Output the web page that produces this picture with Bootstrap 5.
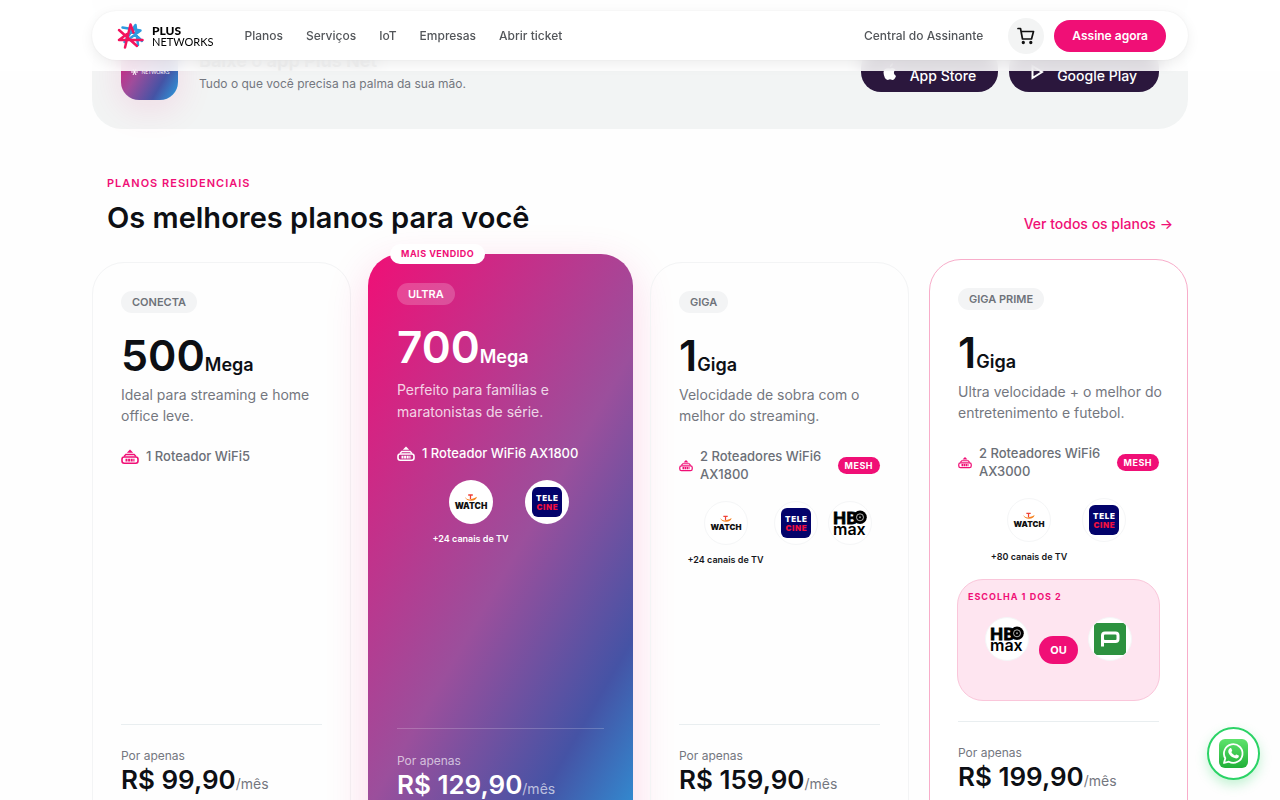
<!DOCTYPE html>
<html lang="pt-BR">
<head>
<meta charset="utf-8">
<meta name="viewport" content="width=device-width, initial-scale=1">
<title>Plus Networks</title>
<link href="https://cdn.jsdelivr.net/npm/bootstrap@5.3.0/dist/css/bootstrap.min.css" rel="stylesheet">
<style>
:root{--pink:#f00f76;--ink:#0d0f14;--gray:#74777f}
body{font-family:Inter,"Liberation Sans",sans-serif;color:var(--ink);background:#fefefe;height:100vh;overflow:hidden;-webkit-font-smoothing:antialiased}
.wrap{max-width:1144px;padding:0 24px;margin:0 auto;width:100%}
.topbar{background:rgba(255,255,255,.88);backdrop-filter:blur(8px);padding:11px 0}
.pill{background:#fff;border-radius:30px;height:49px;padding:0 22px 0 24px;box-shadow:0 0 2px rgba(0,0,0,.06),0 4px 14px rgba(0,0,0,.07)}
.brand{text-decoration:none;color:#000;gap:7px;font-family:Lato,sans-serif;font-size:11px;line-height:11px}
.brand b,.brand i{display:block;font-style:normal}
.brand b{font-weight:900;font-size:12px}
.navlink{font-size:12px;font-weight:500;color:#53565a;text-decoration:none}
.menu{gap:23px;margin-left:31px}
.cart{width:36px;height:36px;border-radius:50%;border:0;background:#f3f4f4;margin-left:25px;margin-right:10px;place-items:center}
.cta{background:var(--pink);color:#fff;border:0;border-radius:16px;height:32px;padding:0 18px;font-size:12px;font-weight:600}
.app{background:#f2f4f4;border-radius:0 0 30px 30px;height:129px;padding:0 29px 29px}
.appicon{width:57px;height:64px;border-radius:18px;background:linear-gradient(120deg,#e91175,#a04c9b 40%,#4553a5 72%,#2b9fe0);box-shadow:0 8px 36px rgba(240,15,118,.12);color:#fff;font:5px/8px Lato,sans-serif;padding-top:32px;gap:3px}
.apptext{margin-left:21px;margin-bottom:7px}
.apptext h3{font-size:18px;line-height:24px;font-weight:700;margin:0 0 2px}
.apptext p{font-size:12px;line-height:18px;color:var(--gray);margin:0}
.store{background:#2b173d;color:#fff;border-radius:20px;height:44px;padding:0 22px;margin-bottom:8px;font-size:14px;font-weight:500;text-decoration:none;gap:13px}
.store span{padding-top:10px}
.store svg{margin-top:4px}
.kick{color:var(--pink);font-size:11px;line-height:16px;font-weight:600;letter-spacing:1px;text-transform:uppercase}
.head{padding:46px 15px 0}
.head h2{font-size:29px;line-height:40px;font-weight:600;margin:7px 0 0}
.all{color:var(--pink);font-size:14px;line-height:20px;font-weight:500;text-decoration:none;margin-bottom:4px}
.plans{display:grid;grid-template-columns:repeat(4,minmax(0,1fr));gap:20px;margin-top:24px}
.plan{border:1px solid #f3f4f5;border-radius:32px;padding:28px 28px 100px;display:flex;flex-direction:column;align-items:flex-start;position:relative}
.hot{margin:-8px -3px;border:0;color:#fff;background:linear-gradient(120deg,#f00f76,#9b4f9c 50%,#4553a5 76%,#2b9fe0 97%);box-shadow:0 12px 44px rgba(240,15,118,.16);padding:29px 29px 104px}
.prime{border-color:#f8adca;margin:-3px 0 3px;background:#fff}
.tagname{background:#f3f4f5;color:#6e7279;border-radius:11px;line-height:22px;padding:0 11px;font-size:11px;font-weight:600}
.hot .tagname{background:rgba(255,255,255,.2);color:#fff}
.sold{position:absolute;left:22px;top:-10px;background:#fff;color:var(--pink);font-size:9px;line-height:20px;font-weight:700;border-radius:10px;padding:0 11px;letter-spacing:.5px}
.speed{font-size:43px;line-height:36px;font-weight:600;margin-top:24px}
.speed span{font-size:18px}
.hot .speed{font-size:44px}
.desc{font-size:14px;line-height:21px;color:var(--gray);margin:1px 0 0;min-height:42px;white-space:nowrap}
.hot .desc{color:rgba(255,255,255,.8);line-height:22px;margin-top:4px}
.feat{font-size:13px;line-height:18px;font-weight:500;color:#6b6f77;margin-top:21px;gap:7px;width:100%}
.feat svg{width:18px;height:18px;color:var(--pink);flex-shrink:0}
.two svg{width:14px;height:14px}
.hot .feat,.hot .feat svg{color:#fff}
.mesh{background:var(--pink);color:#fff;font-size:9px;font-weight:700;line-height:17px;padding:0 7px;border-radius:9px;margin-left:auto;letter-spacing:.5px}
.apps{display:flex;width:100%;margin-top:18px;justify-content:center;align-items:flex-start}
.svc{display:flex;flex-direction:column;align-items:center;font-size:9px;font-weight:600;line-height:14px;white-space:nowrap;gap:8px;color:#15171c}
.disc{width:44px;height:44px;border-radius:50%;background:#fff;border:1px solid #f5f6f7;display:grid;place-items:center;overflow:hidden}
.hot .disc{border:0}.hot .svc{color:#fff}
.pick{width:calc(100% + 2px);margin:15px -1px 0;min-height:122px;background:#fee5f0;border:1px solid #fac6da;border-radius:26px;padding:9px 10px}
.pick .kick{font-size:9px;font-weight:700;line-height:16px}
.pickrow{gap:10px;margin-top:12px}
.or{background:var(--pink);color:#fff;font-size:11px;font-weight:700;line-height:28px;border-radius:14px;padding:0 11px;margin-top:19px}
.cost{border-top:1px solid #e9eef0;width:100%;margin-top:auto;padding-top:23px}
.hot .cost{border-color:rgba(255,255,255,.2);padding-top:24px}
.cost small{display:block;font-size:12px;line-height:16px;color:var(--gray)}
.cost strong{font-size:26px;line-height:32px;font-weight:600}
.cost span{font-size:14px;color:var(--gray)}
.hot .cost small,.hot .cost span{color:rgba(255,255,255,.65)}
.prime .cost{margin-top:20px}
.wa{position:fixed;right:20px;bottom:20px;width:53px;height:53px;border-radius:50%;background:#fff;border:2px solid #2bd366;box-shadow:0 5px 12px rgba(43,211,102,.28);display:grid;place-items:center}
</style>
</head>
<body>
<svg width="0" height="0" class="position-absolute">
<defs>
<linearGradient id="gw" x2="0" y2="1"><stop stop-color="#5ee36c"/><stop offset="1" stop-color="#20b038"/></linearGradient>
<symbol id="router" viewBox="0 0 18 18"><path fill="currentColor" d="M9 2.500 12.200 5.700H5.800z"/><rect x="1" y="10" width="16" height="6.200" rx="2.200" fill="none" stroke="currentColor" stroke-width="1.600"/><path d="M3 9.500 4.800 7.500h8.400l1.800 2" fill="none" stroke="currentColor" stroke-width="1.300"/><path d="M4.500 13.100h9" stroke="currentColor" stroke-width="2.800" stroke-dasharray="2 .6"/></symbol>
<symbol id="watch" viewBox="0 0 34 18"><path d="M11 3.800q1.500 3.300 5.800 2.400T23 3.800q-1 4-6 4T11 3.800z" fill="#f58220"/><path d="M14.200 2h4.600M16.500 2v4" stroke="#ef4136" stroke-width="1.300"/><text x="17" y="16" text-anchor="middle" font-family="Inter,sans-serif" font-size="8.500" font-weight="900" fill="#111">WATCH</text></symbol>
<symbol id="tele" viewBox="0 0 30 30"><rect width="30" height="30" rx="6" fill="#03036b"/><text x="15.300" y="14" text-anchor="middle" font-family="Inter,sans-serif" font-size="8" font-weight="900" letter-spacing=".7" fill="#fff">TELE</text><text x="15.300" y="22.800" text-anchor="middle" font-family="Inter,sans-serif" font-size="8" font-weight="900" letter-spacing=".6" fill="#f01040">CINE</text></symbol>
<symbol id="hbo" viewBox="0 0 34 26"><text x="0" y="13.500" font-family="Lato,sans-serif" font-size="17" font-weight="900" stroke="#000" stroke-width=".8" fill="#000">HB</text><circle cx="27" cy="7.300" r="6.800" fill="#000"/><circle cx="27" cy="7.300" r="3.500" fill="none" stroke="#fff" stroke-width=".7"/><circle cx="27" cy="7.300" r="1" fill="#999"/><text x="0" y="24.500" font-family="Inter,sans-serif" font-size="16" font-weight="600" fill="#000">max</text></symbol>
<symbol id="star" viewBox="0 0 28 28"><g fill="none" stroke-width="2.500" stroke-linecap="round" stroke-linejoin="round"><path stroke="#2d9be0" d="M6 5.500 24 8.500 14 16M19 3 8 20M25.500 19 13 7M19 3l2.500 20"/><path stroke="#f2135d" d="M2.500 8 20.500 24M2.500 18H26M8.500 25.500 14 2.500M14 2.500l3 8M2.500 18l8-6"/></g></symbol>
</defs>
</svg>

<header class="topbar fixed-top">
<div class="wrap">
<nav class="pill d-flex align-items-center">
<a href="#" class="brand d-flex align-items-center"><svg width="29" height="28"><use href="#star"/></svg><span><b>PLUS</b><i>NETWORKS</i></span></a>
<div class="menu d-flex">
<a class="navlink" href="#">Planos</a><a class="navlink" href="#">Serviços</a><a class="navlink" href="#">IoT</a><a class="navlink" href="#">Empresas</a><a class="navlink" href="#">Abrir ticket</a>
</div>
<a class="navlink ms-auto" href="#">Central do Assinante</a>
<button class="cart d-grid p-0" aria-label="Carrinho"><svg width="20" height="20" viewBox="0 0 20 20" fill="none" stroke="#111" stroke-width="1.700" stroke-linecap="round" stroke-linejoin="round"><path d="M2 2.500h2.500l2 10.500h9l2-7.500H5.200"/><circle cx="7.300" cy="16.500" r=".8"/><circle cx="14.800" cy="16.500" r=".8"/></svg></button>
<button class="cta">Assine agora</button>
</nav>
</div>
</header>

<main>
<div class="wrap">
<section class="app d-flex align-items-end">
<div class="appicon d-flex justify-content-center align-items-start"><svg width="9" height="8"><g stroke="#fff"><path d="M1 4h7M3 1l3 6M6 1 3 7"/></g></svg><span>NETWORKS</span></div>
<div class="apptext"><h3>Baixe o app Plus Net</h3><p>Tudo o que você precisa na palma da sua mão.</p></div>
<div class="d-flex ms-auto" style="gap:11px">
<a href="#" class="store d-flex align-items-center"><svg width="14" height="18" viewBox="0 0 14 18"><path fill="#fff" d="M10 0Q7 .5 7 4 10 3.500 10 0M13 13q-1.500 4-3.500 4L7 16.300 4.700 17Q1 16 .5 9.500 1 4.500 7 5.500q3-1.500 5.500 1-3.500 3.500.5 6.500"/></svg><span>App Store</span></a>
<a href="#" class="store d-flex align-items-center"><svg width="13" height="16" viewBox="0 0 13 16"><path fill="none" stroke="#fff" stroke-width="2" d="M1.500 2v12L11 8z"/></svg><span>Google Play</span></a>
</div>
</section>

<section>
<div class="head d-flex justify-content-between align-items-end">
<div><div class="kick">Planos residenciais</div><h2>Os melhores planos para você</h2></div>
<a class="all" href="#">Ver todos os planos →</a>
</div>
<div class="plans">
<article class="plan">
<span class="tagname">CONECTA</span>
<div class="speed">500<span>Mega</span></div>
<p class="desc">Ideal para streaming e home<br>office leve.</p>
<div class="feat d-flex align-items-center"><svg><use href="#router"/></svg>1 Roteador WiFi5</div>
<div class="cost"><small>Por apenas</small><strong>R$ 99,90</strong><span>/mês</span></div>
</article>

<article class="plan hot">
<span class="sold">MAIS VENDIDO</span>
<span class="tagname">ULTRA</span>
<div class="speed">700<span>Mega</span></div>
<p class="desc">Perfeito para famílias e<br>maratonistas de série.</p>
<div class="feat d-flex align-items-center"><svg><use href="#router"/></svg>1 Roteador WiFi6 AX1800</div>
<div class="apps" style="gap:16px"><div class="svc"><div class="disc"><svg width="34" height="18"><use href="#watch"/></svg></div>+24 canais de TV</div><div class="svc"><div class="disc"><svg width="30" height="30"><use href="#tele"/></svg></div></div></div>
<div class="cost"><small>Por apenas</small><strong>R$ 129,90</strong><span>/mês</span></div>
</article>

<article class="plan">
<span class="tagname">GIGA</span>
<div class="speed">1<span>Giga</span></div>
<p class="desc">Velocidade de sobra com o<br>melhor do streaming.</p>
<div class="feat two d-flex align-items-center"><svg><use href="#router"/></svg><span>2 Roteadores WiFi6<br>AX1800</span><span class="mesh">MESH</span></div>
<div class="apps" style="gap:10px"><div class="svc"><div class="disc"><svg width="32" height="18"><use href="#watch"/></svg></div>+24 canais de TV</div><div class="svc"><div class="disc"><svg width="30" height="30"><use href="#tele"/></svg></div></div><div class="svc"><div class="disc"><svg width="34" height="26"><use href="#hbo"/></svg></div></div></div>
<div class="cost"><small>Por apenas</small><strong>R$ 159,90</strong><span>/mês</span></div>
</article>

<article class="plan prime">
<span class="tagname">GIGA PRIME</span>
<div class="speed">1<span>Giga</span></div>
<p class="desc">Ultra velocidade + o melhor do<br>entretenimento e futebol.</p>
<div class="feat two d-flex align-items-center"><svg><use href="#router"/></svg><span>2 Roteadores WiFi6<br>AX3000</span><span class="mesh">MESH</span></div>
<div class="apps" style="gap:15px"><div class="svc"><div class="disc"><svg width="32" height="18"><use href="#watch"/></svg></div>+80 canais de TV</div><div class="svc"><div class="disc"><svg width="30" height="30"><use href="#tele"/></svg></div></div></div>
<div class="pick"><div class="kick">Escolha 1 dos 2</div>
<div class="pickrow d-flex justify-content-center align-items-start"><div class="disc"><svg width="34" height="26"><use href="#hbo"/></svg></div><div class="or">OU</div><div class="disc"><svg width="32" height="32" viewBox="0 0 32 32"><rect width="32" height="32" fill="#2c923f"/><rect x="8.500" y="10" width="15.500" height="8.500" rx="2.500" fill="none" stroke="#fff" stroke-width="3"/><rect x="7" y="13" width="3" height="10.500" fill="#fff"/></svg></div></div></div>
<div class="cost"><small>Por apenas</small><strong>R$ 199,90</strong><span>/mês</span></div>
</article>
</div>
</section>
</div>
</main>

<a href="#" class="wa" aria-label="WhatsApp"><svg width="29" height="29" viewBox="0 0 29 29"><rect width="29" height="29" rx="6" fill="url(#gw)"/><path d="M5 24 6.300 19.300A9.300 9.300 0 1 1 9.900 22.700Z" fill="none" stroke="#fff" stroke-width="1.800" stroke-linejoin="round"/><path d="M11 9.300c.9-.5 1.300-.2 1.600.7l.6 1.500c.1.600-.3 1-.9 1.600.9 1.700 2 2.700 3.700 3.500.7-.6 1-1.300 1.500-1.100l2.200 1.100c.4.300.1 1.500-.5 2.100-1.300 1.100-3 .9-5-.1-2.200-1.100-4-3-4.800-5.200-.4-1.700.3-3.300 1.600-4.100z" fill="#fff"/></svg></a>
<script src="https://cdn.jsdelivr.net/npm/bootstrap@5.3.0/dist/js/bootstrap.bundle.min.js"></script>
</body>
</html>
